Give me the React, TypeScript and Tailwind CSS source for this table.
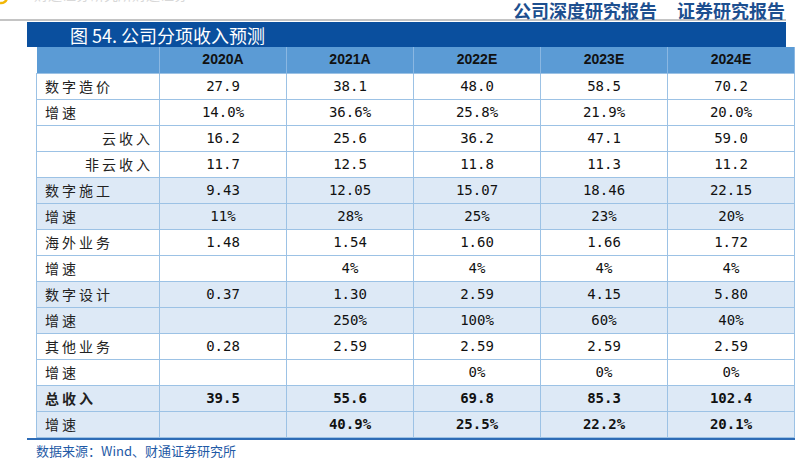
import React from 'react';

type Row = {
  label: string;
  values: string[];
  indent?: boolean;
  shaded?: boolean;
  bold?: boolean;
  boldLabel?: boolean;
};

const years = ['2020A', '2021A', '2022E', '2023E', '2024E'];

const rows: Row[] = [
  { label: '数字造价', values: ['27.9', '38.1', '48.0', '58.5', '70.2'] },
  { label: '增速', values: ['14.0%', '36.6%', '25.8%', '21.9%', '20.0%'] },
  { label: '云收入', values: ['16.2', '25.6', '36.2', '47.1', '59.0'], indent: true },
  { label: '非云收入', values: ['11.7', '12.5', '11.8', '11.3', '11.2'], indent: true },
  { label: '数字施工', values: ['9.43', '12.05', '15.07', '18.46', '22.15'], shaded: true },
  { label: '增速', values: ['11%', '28%', '25%', '23%', '20%'], shaded: true },
  { label: '海外业务', values: ['1.48', '1.54', '1.60', '1.66', '1.72'] },
  { label: '增速', values: ['', '4%', '4%', '4%', '4%'] },
  { label: '数字设计', values: ['0.37', '1.30', '2.59', '4.15', '5.80'], shaded: true },
  { label: '增速', values: ['', '250%', '100%', '60%', '40%'], shaded: true },
  { label: '其他业务', values: ['0.28', '2.59', '2.59', '2.59', '2.59'] },
  { label: '增速', values: ['', '', '0%', '0%', '0%'] },
  { label: '总收入', values: ['39.5', '55.6', '69.8', '85.3', '102.4'], shaded: true, bold: true, boldLabel: true },
  { label: '增速', values: ['', '40.9%', '25.5%', '22.2%', '20.1%'], shaded: true, bold: true },
];

const cjk = "font-['Noto_Sans_CJK_SC',sans-serif]";
const num = "font-['DejaVu_Sans_Mono','Liberation_Mono',monospace]";

export default function App() {
  return (
    <div className="w-[795px] h-[459px] overflow-hidden bg-white">
      {/* page header */}
      <div className="h-[19px] flex justify-between items-start">
        <div className="flex items-start h-full">
          <svg width="8" height="8" viewBox="0 0 8 8" className="-mt-[2px]">
            <path d="M0 5 A6 6 0 0 0 7 0" fill="none" stroke="#f2b705" strokeWidth="2.5" />
          </svg>
          <span className={`${cjk} ml-[26px] -mt-[15px] text-[14px] leading-[18px] text-[#d8d8d8]`}>
            财通证券研究所财通证券
          </span>
        </div>
        <div className={`${cjk} flex gap-[20px] pr-[10px] mt-[1px] text-[18px] leading-[18px] font-bold text-[#1d4f8f]`}>
          <span>公司深度研究报告</span>
          <span>证券研究报告</span>
        </div>
      </div>
      <div className="h-[2px] w-[786px] bg-[#c4c4c4]" />
      <div className="h-[1px]" />

      {/* figure title */}
      <div className="ml-[27px] w-[759px] h-[25px] bg-[#0a4f9e] flex items-center pl-[43px] text-white">
        <span className={`${cjk} text-[18px] leading-none`}>图 54. 公司分项收入预测</span>
      </div>

      {/* table */}
      <table className="ml-[36px] w-[759px] table-fixed border-collapse">
        <colgroup>
          <col className="w-[123px]" />
          {years.map((y) => (
            <col key={y} className="w-[127px]" />
          ))}
        </colgroup>
        <thead>
          <tr className="h-[26px] bg-[#5b9bd5]">
            <th className="border-r border-[#8ab7e2]" />
            {years.map((y) => (
              <th
                key={y}
                className="border-r border-[#8ab7e2] text-center text-[14px] font-bold text-[#111] font-['Liberation_Sans',Arial,sans-serif]"
              >
                {y}
              </th>
            ))}
          </tr>
        </thead>
        <tbody>
          {rows.map((r, i) => (
            <tr key={i} className={`h-[26px] ${r.shaded ? 'bg-[#dde9f6]' : 'bg-white'}`}>
              <td
                className={`${cjk} border border-[#9cc2e5] text-[14px] tracking-[3px] text-[#222] ${
                  r.indent ? 'text-right pr-[6px]' : 'text-left pl-[8px]'
                } ${r.boldLabel ? 'font-bold' : ''}`}
              >
                {r.label}
              </td>
              {r.values.map((v, j) => (
                <td
                  key={j}
                  className={`${num} border border-[#9cc2e5] text-center text-[14px] text-[#111] ${
                    r.bold ? 'font-bold' : ''
                  }`}
                >
                  {v}
                </td>
              ))}
            </tr>
          ))}
        </tbody>
      </table>
      <div className="ml-[27px] h-[2px] bg-[#2e6cb6]" />

      {/* source */}
      <div className={`${cjk} ml-[36px] mt-[3px] text-[13px] leading-[16px] text-[#1f5aa6]`}>
        数据来源：Wind、财通证券研究所
      </div>
    </div>
  );
}
